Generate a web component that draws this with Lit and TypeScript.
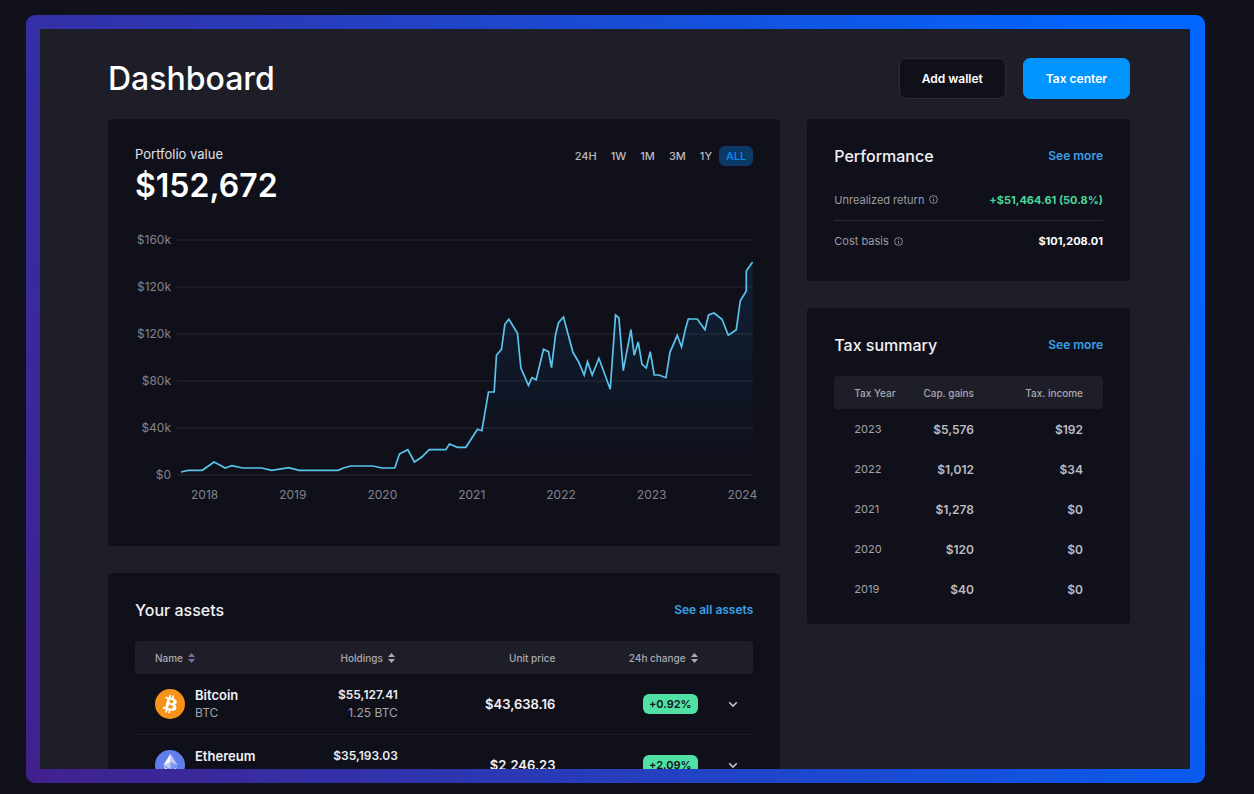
import { LitElement, html, css, svg } from "lit";
import { customElement, state } from "lit/decorators.js";

interface TaxRow { year: string; gains: string; income: string; }
interface Asset { id: string; name: string; ticker: string; value: string; amount: string; price: string; change: string; }

const RANGES = ["24H", "1W", "1M", "3M", "1Y", "ALL"];
const Y_LABELS = ["$160k", "$120k", "$120k", "$80k", "$40k", "$0"];
const X_LABELS = ["2018", "2019", "2020", "2021", "2022", "2023", "2024"];

const TAX: TaxRow[] = [
  { year: "2023", gains: "$5,576", income: "$192" },
  { year: "2022", gains: "$1,012", income: "$34" },
  { year: "2021", gains: "$1,278", income: "$0" },
  { year: "2020", gains: "$120", income: "$0" },
  { year: "2019", gains: "$40", income: "$0" },
];

const ASSETS: Asset[] = [
  { id: "btc", name: "Bitcoin", ticker: "BTC", value: "$55,127.41", amount: "1.25 BTC", price: "$43,638.16", change: "+0.92%" },
  { id: "eth", name: "Ethereum", ticker: "ETH", value: "$35,193.03", amount: "15.67 ETH", price: "$2,246.23", change: "+2.09%" },
];

// Portfolio history, in plot units (576 wide, 237 tall, y downwards).
const SERIES: [number, number][] = [
  [4, 233], [11.3, 231.3], [25.3, 231.3], [37, 223], [48.3, 229], [54.7, 226.7], [65.7, 229], [84.7, 229],
  [94.7, 231.3], [111.7, 228.7], [122, 231.3], [161, 231.3], [166.3, 229], [173.7, 227], [195.7, 227],
  [205, 229], [217.7, 229], [222.3, 215], [230.7, 210.7], [237.3, 223], [244.7, 218], [252, 210.7],
  [268.7, 210.7], [272.3, 205], [280.3, 208.3], [288.7, 208.3], [300.3, 190.3], [304.7, 191.7],
  [311.3, 153], [317, 153], [319.3, 116.3], [324.3, 110.3], [327.7, 85.3], [331.7, 80.3], [340.3, 94.3],
  [343.7, 129], [351.3, 146.3], [354.7, 138.7], [359, 140.7], [366.3, 110.3], [371.3, 112.7],
  [374.3, 128.7], [378.3, 96], [381.3, 83.7], [386.3, 78], [395.7, 113.3], [401.3, 122.7], [407, 136],
  [410.3, 122.7], [415, 136], [421.7, 119.3], [433, 150.3], [438.3, 76], [441.7, 79], [446, 131.7],
  [453.7, 90.7], [457, 116.3], [461, 103], [464.7, 125], [469, 129], [473, 112.7], [477, 136],
  [481.7, 136], [488.7, 138.7], [492.7, 113.3], [500, 96.3], [504.3, 108], [508, 90.7], [511, 80],
  [520, 80], [527.7, 90.7], [531.3, 76], [536.7, 74], [544.7, 80.3], [551, 96.3], [559, 90.7],
  [563, 61.7], [569, 52], [569, 32], [575.3, 23],
];

const base = css`
  * { box-sizing: border-box; }
  h1, h2, p { margin: 0; }
  button { font: inherit; color: inherit; background: none; border: 0; padding: 0; cursor: pointer; }
  a { text-decoration: none; }
  table { width: 100%; border-collapse: separate; border-spacing: 0; table-layout: fixed; }
  th, td { padding: 0; text-align: right; font-weight: 400; }
  .bar { display: flex; align-items: center; justify-content: space-between; }
  .title { font-size: 16px; line-height: 20px; font-weight: 500; color: #f2f2f4; }
  .more { font-size: 12px; line-height: 20px; font-weight: 600; color: #3aa0e6; }
  .head th { height: 33px; background: #1e1e29; font-size: 10px; line-height: 14px; font-weight: 500; color: #a9a9b0; }
  .head th:first-child { border-radius: 4px 0 0 4px; }
  .head th:last-child { border-radius: 0 4px 4px 0; }
  .first { padding-left: 20px; text-align: left; }
`;

@customElement("portfolio-chart")
export class PortfolioChart extends LitElement {
  static styles = [base, css`
    :host { display: block; }
    .chart { display: grid; grid-template-columns: 36px minmax(0, 1fr); column-gap: 6px; }
    .labels { font-size: 12px; line-height: 14px; color: #83838c; }
    .y { display: flex; flex-direction: column; justify-content: space-between; text-align: right; }
    .plot { display: block; width: 100%; height: 249px; padding: 6px 0; }
    .x { grid-column: 2; display: flex; justify-content: space-between; margin: 6px -4px 0 14px; }
  `];

  render() {
    const line = SERIES.map((p) => p.join(",")).join(" ");
    return html`
      <div class="chart">
        <div class="labels y">${Y_LABELS.map((l) => html`<span>${l}</span>`)}</div>
        <svg class="plot" viewBox="0 0 576 237" preserveAspectRatio="none" role="img" aria-label="Portfolio value over time">
          <defs>
            <linearGradient id="fade" gradientUnits="userSpaceOnUse" x1="0" y1="20" x2="0" y2="228">
              <stop offset="0" stop-color="#0c8ce9" stop-opacity=".13"></stop>
              <stop offset="1" stop-color="#0c8ce9" stop-opacity="0"></stop>
            </linearGradient>
          </defs>
          ${Y_LABELS.map((_, i) => svg`<rect x="0" y=${i * 47} width="576" height="2" fill="#1c1c27"></rect>`)}
          <polygon points="4,237 ${line} 575.3,237" fill="url(#fade)"></polygon>
          <polyline points=${line} fill="none" stroke="#5ac4ec" stroke-width="1.7" vector-effect="non-scaling-stroke"></polyline>
        </svg>
        <div class="labels x">${X_LABELS.map((l) => html`<span>${l}</span>`)}</div>
      </div>`;
  }
}

@customElement("portfolio-card")
export class PortfolioCard extends LitElement {
  @state() private range = "ALL";

  static styles = [base, css`
    :host { display: block; padding: 27px 27px 44px; }
    .top { display: flex; justify-content: space-between; align-items: flex-start; margin-bottom: 31px; }
    .caption { font-size: 13px; line-height: 16px; color: #e2e2e6; }
    .value { margin-top: 8px; font-size: 32px; line-height: 32px; font-weight: 600; color: #fff; }
    .ranges { display: flex; }
    .range { height: 20px; padding: 0 7px; border-radius: 6px; font-size: 11px; font-weight: 500; color: #b9b9be; }
    .active { background: #0c3a66; color: #0a8cf0; }
  `];

  render() {
    return html`
      <div class="top">
        <div>
          <p class="caption">Portfolio value</p>
          <p class="value">$152,672</p>
        </div>
        <div class="ranges">
          ${RANGES.map((r) => html`<button class="range ${r === this.range ? "active" : ""}"
            aria-pressed=${r === this.range} @click=${() => (this.range = r)}>${r}</button>`)}
        </div>
      </div>
      <portfolio-chart></portfolio-chart>`;
  }
}

@customElement("performance-card")
export class PerformanceCard extends LitElement {
  static styles = [base, css`
    :host { display: block; padding: 27px 27px 20px; }
    .rows { margin-top: 13px; }
    .row { height: 41px; font-size: 11px; color: #9c9ca4; }
    .row + .row { border-top: 1px solid #2a2a35; }
    .label { display: flex; align-items: center; gap: 5px; }
    .info { display: block; width: 9px; height: 9px; }
    .num { font-weight: 700; color: #fff; }
    .gain { color: #4bd79c; }
  `];

  private info() {
    return html`<svg class="info" viewBox="0 0 9 9" fill="none" stroke="#9c9ca4" stroke-width=".9" aria-hidden="true">
      <circle cx="4.5" cy="4.5" r="3.9"></circle><path d="M4.5 4v2.6M4.5 2.3v.9"></path></svg>`;
  }

  render() {
    return html`
      <div class="bar"><h2 class="title">Performance</h2><a class="more" href="#performance">See more</a></div>
      <div class="rows">
        <div class="bar row"><span class="label">Unrealized return ${this.info()}</span><span class="num gain">+$51,464.61 (50.8%)</span></div>
        <div class="bar row"><span class="label">Cost basis ${this.info()}</span><span class="num">$101,208.01</span></div>
      </div>`;
  }
}

@customElement("tax-card")
export class TaxCard extends LitElement {
  static styles = [base, css`
    :host { display: block; padding: 27px 27px 15px; }
    table { margin-top: 21px; }
    .year { width: 30%; }
    .gains { width: 22%; }
    td { height: 40px; font-size: 11px; color: #a3a3aa; }
    .num { font-size: 12px; font-weight: 600; color: #bdbdc2; }
    .last { padding-right: 20px; }
  `];

  render() {
    return html`
      <div class="bar"><h2 class="title">Tax summary</h2><a class="more" href="#tax">See more</a></div>
      <table>
        <thead><tr class="head"><th class="first year">Tax Year</th><th class="gains">Cap. gains</th><th class="last">Tax. income</th></tr></thead>
        <tbody>${TAX.map((r) => html`<tr><td class="first">${r.year}</td><td class="num">${r.gains}</td><td class="num last">${r.income}</td></tr>`)}</tbody>
      </table>`;
  }
}

@customElement("assets-card")
export class AssetsCard extends LitElement {
  static styles = [base, css`
    :host { display: block; padding: 27px; }
    table { margin-top: 21px; }
    .c1 { width: 24%; }
    .c2 { width: 19%; }
    .c3 { width: 25%; }
    .c4 { width: 23%; }
    .held { padding-right: 3px; }
    .head .held { padding-right: 6px; }
    td { height: 61px; border-bottom: 1px solid #1c1c27; }
    .sort { display: inline-flex; align-items: center; gap: 5px; font-weight: 500; }
    .arrows { display: block; width: 7px; height: 10px; fill: #a9a9b0; }
    .lilac { fill: #73739b; }
    .asset { display: flex; align-items: center; gap: 10px; }
    .coin { display: block; flex: none; width: 30px; height: 30px; }
    .main { font-size: 13px; line-height: 18px; font-weight: 600; color: #f2f2f4; }
    .sum { font-size: 12px; line-height: 18px; font-weight: 600; color: #ececef; }
    .sub { font-size: 12px; line-height: 18px; color: #a3a3aa; }
    .badge { display: block; width: fit-content; margin-left: auto; padding: 0 6px; border-radius: 6px; background: #50e0a3; color: #10101b; font-size: 11px; line-height: 20px; font-weight: 600; }
    .end { padding-right: 15px; }
    .toggle { display: block; margin-left: auto; }
    .chevron { display: block; width: 10px; height: 10px; }
  `];

  private arrows(tone = "") {
    return html`<svg class="arrows ${tone}" viewBox="0 0 7 10" aria-hidden="true"><path d="M3.5 0 7 4H0zM3.5 10 0 6h7z"></path></svg>`;
  }

  private coin(id: string) {
    return id === "btc"
      ? html`<svg class="coin" viewBox="0 0 32 32" aria-hidden="true"><circle cx="16" cy="16" r="16" fill="#f7931a"></circle>
          <path fill="#fff" d="M23.189 14.02c.314-2.096-1.283-3.223-3.465-3.975l.708-2.84-1.728-.43-.69 2.765c-.454-.114-.92-.22-1.385-.326l.695-2.783L15.596 6l-.708 2.839c-.376-.086-.746-.17-1.104-.26l.002-.009-2.384-.595-.46 1.846s1.283.294 1.256.312c.7.175.826.638.805 1.006l-.806 3.235c.048.012.11.03.18.057l-.183-.045-1.13 4.532c-.086.212-.303.531-.793.41.018.025-1.256-.313-1.256-.313l-.858 1.978 2.25.561c.418.105.828.215 1.231.318l-.715 2.872 1.727.43.708-2.84c.472.127.93.245 1.378.357l-.706 2.828 1.728.43.715-2.866c2.948.558 5.164.333 6.097-2.333.752-2.146-.037-3.385-1.588-4.192 1.13-.26 1.98-1.003 2.207-2.538zm-3.95 5.538c-.533 2.147-4.148.986-5.32.695l.95-3.805c1.172.293 4.929.872 4.37 3.11zm.535-5.569c-.487 1.953-3.495.96-4.47.717l.86-3.45c.975.243 4.118.696 3.61 2.733z"></path></svg>`
      : html`<svg class="coin" viewBox="0 0 32 32" aria-hidden="true"><circle cx="16" cy="16" r="16" fill="#627eea"></circle>
          <g fill="#fff"><path fill-opacity=".6" d="M16.5 4v8.9l7.5 3.3z"></path><path d="M16.5 4 9 16.2l7.5-3.3z"></path>
          <path fill-opacity=".6" d="M16.5 22v6L24 17.6z"></path><path d="M16.5 28v-6L9 17.6z"></path>
          <path fill-opacity=".2" d="m16.5 20.6 7.5-4.4-7.5-3.3z"></path><path fill-opacity=".6" d="m9 16.2 7.5 4.4v-7.7z"></path></g></svg>`;
  }

  render() {
    return html`
      <div class="bar"><h2 class="title">Your assets</h2><a class="more" href="#assets">See all assets</a></div>
      <table>
        <thead><tr class="head">
          <th class="first c1"><button class="sort">Name ${this.arrows("lilac")}</button></th>
          <th class="c2 held"><button class="sort">Holdings ${this.arrows()}</button></th>
          <th class="c3">Unit price</th>
          <th class="c4"><button class="sort">24h change ${this.arrows()}</button></th>
          <th></th>
        </tr></thead>
        <tbody>${ASSETS.map((a) => html`<tr>
          <td class="first"><div class="asset">${this.coin(a.id)}<div><div class="main">${a.name}</div><div class="sub">${a.ticker}</div></div></div></td>
          <td class="held"><div class="sum">${a.value}</div><div class="sub">${a.amount}</div></td>
          <td class="main">${a.price}</td>
          <td><span class="badge">${a.change}</span></td>
          <td class="end"><button class="toggle" aria-label="Show ${a.name} details"><svg class="chevron" viewBox="0 0 10 10" fill="none" stroke="#c4c4ca" stroke-width="1.6"><path d="M1.2 3.2 5 7l3.8-3.8"></path></svg></button></td>
        </tr>`)}</tbody>
      </table>`;
  }
}

@customElement("app-root")
export class AppRoot extends LitElement {
  static styles = [base, css`
    :host { display: flex; box-sizing: border-box; height: 100vh; padding: 15px 49px 11px 26px; background: #11111b; font-family: Inter, "Liberation Sans", sans-serif; color: #fff; }
    .frame { flex: 1; min-width: 0; display: flex; padding: 14px 15px 14px 14px; border-radius: 9px; background: linear-gradient(69deg, #42208d, #0066ff 95%); }
    .screen { flex: 1; min-width: 0; overflow: hidden; padding: 29px 60px 0 68px; background: #1e1e29; }
    .heading { font-size: 32px; line-height: 41px; font-weight: 500; }
    .actions { display: flex; gap: 17px; }
    .btn { height: 41px; padding: 0 22px; border: 1px solid #2b2b36; border-radius: 7px; background: #10101b; font-size: 12px; font-weight: 600; }
    .primary { border-color: #0094ff; background: #0094ff; }
    .grid { display: grid; grid-template-columns: minmax(0, 25fr) minmax(0, 12fr); gap: 27px; align-items: start; margin-top: 20px; }
    .col { display: grid; gap: 27px; }
    .card { border-radius: 4px; background: #10101b; }
    .flat { border-radius: 4px 4px 0 0; }
  `];

  render() {
    return html`
      <div class="frame">
        <main class="screen">
          <header class="bar">
            <h1 class="heading">Dashboard</h1>
            <div class="actions"><button class="btn">Add wallet</button><button class="btn primary">Tax center</button></div>
          </header>
          <div class="grid">
            <div class="col"><portfolio-card class="card"></portfolio-card><assets-card class="card"></assets-card></div>
            <div class="col"><performance-card class="card flat"></performance-card><tax-card class="card"></tax-card></div>
          </div>
        </main>
      </div>`;
  }
}
